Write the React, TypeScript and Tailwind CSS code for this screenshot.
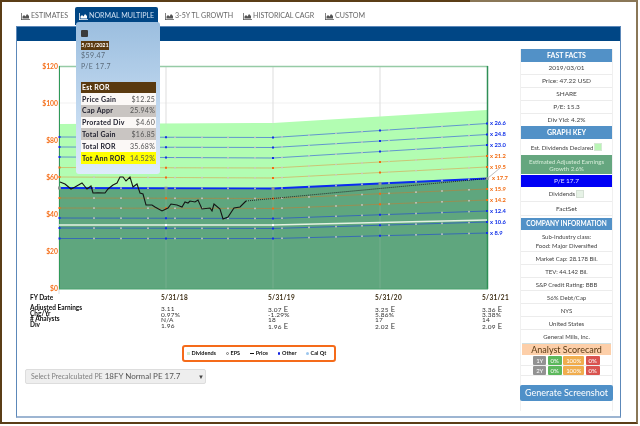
import React from "react";

const TabIcon = ({ light }: { light?: boolean }) => (
  <svg width="9" height="7" viewBox="0 0 18 14" className="shrink-0">
    <path d="M0 0h1.5v12.5H18V14H0z M3 11V7l3-3 3 3 3-5 4 4v5z" fill={light ? "#ffffff" : "#555555"} fillRule="evenodd" />
  </svg>
);

const tabs = [
  { label: "ESTIMATES", w: "w-[61px]" },
  { label: "NORMAL MULTIPLE", w: "w-[83px]", active: true },
  { label: "3-5Y TL GROWTH", w: "w-[78px]" },
  { label: "HISTORICAL CAGR", w: "w-[82px]" },
  { label: "CUSTOM", w: "w-[50px]" },
];

const bX = (x: number, y0: number, y1: number, y2: number) =>
  x <= 273 ? y0 + ((y1 - y0) * (x - 59)) / 214 : y1 + ((y2 - y1) * (x - 273)) / 214;

const lines = [
  { l: "26.6", c: "#1030e8", y: [137, 137.5, 123.5], ly: 123 },
  { l: "24.8", c: "#1030e8", y: [147, 147.5, 134.5], ly: 134 },
  { l: "23.0", c: "#1030e8", y: [157, 158, 145], ly: 145 },
  { l: "21.2", c: "#f26a10", y: [167.5, 168, 156], ly: 156 },
  { l: "19.5", c: "#f26a10", y: [177, 178, 167], ly: 167 },
  { l: "15.9", c: "#f26a10", y: [198, 198.5, 189], ly: 189 },
  { l: "14.2", c: "#f26a10", y: [208, 208.5, 200], ly: 200 },
  { l: "12.4", c: "#1030e8", y: [218, 218.5, 211], ly: 211 },
  { l: "10.6", c: "#1030e8", y: [228, 228.5, 222], ly: 222 },
  { l: "8.9", c: "#1030e8", y: [238.5, 238.5, 233], ly: 233 },
];

const grays = [94, 121, 148, 175, 202, 228, 255, 282, 309, 336, 362, 389, 416, 442, 469];
const years = [166, 273, 380, 487];
const axis = [
  ["$120", 66], ["$100", 103], ["$80", 140], ["$60", 177], ["$40", 214], ["$20", 251], ["$0", 288],
] as const;

const price =
  "60,182 65,184 71,189 75,187 82,183 87,189 91,186 93,193 98,192.7 105,193 108,189 113,185 117,183 120,177 123,177 126,181 130,177 133,187 137,184 140,193 143,194 146,205 152,205 155,207 162,211 168,208 171,204 177,205 182,207 185,202 188,203 190,201 195,202 198,200 202,209 210,208 212,211 214,204 220,209 223,219 228,217 234,208 240,207 246,201";

const Chart = () => (
  <svg width="503" height="254" viewBox="17 41 503 254" className="block" fontFamily="Lato, sans-serif">
    <rect x="59" y="66" width="429" height="223" fill="#ffffff" />
    <line x1="59" x2="487" y1="103" y2="103" stroke="#f1f1f1" />
    {[59, 166, 273, 380].map((x) => (
      <line key={x} x1={x} x2={x} y1="66" y2={x === 59 ? 294 : 125} stroke="#dddddd" />
    ))}
    <polygon points="59,124 273,123 487,110 487,178 273,188 59,188" fill="#b2fdb2" />
    <polygon points="59,188 273,188 487,178 487,289 59,289" fill="#5fa67e" />
    {[166, 273, 380].map((x) => (
      <line key={x} x1={x} x2={x} y1="123" y2="289" stroke="#d8d8d8" strokeOpacity="0.18" />
    ))}
    <line x1="59" x2="488" y1="66.5" y2="66.5" stroke="#96cba6" strokeWidth="1.5" />
    <line x1="59.5" x2="59.5" y1="66" y2="289" stroke="#2f9a58" />
    <line x1="487.5" x2="487.5" y1="66" y2="289" stroke="#2f8f56" strokeWidth="1.5" />
    <line x1="59" x2="488" y1="289" y2="289" stroke="#4aa36e" />
    {lines.map((ln) => (
      <g key={ln.l}>
        <polyline
          points={`59,${ln.y[0]} 273,${ln.y[1]} 487,${ln.y[2]}`}
          fill="none"
          stroke={ln.c}
          strokeOpacity={ln.c === "#f26a10" ? 0.38 : 0.5}
          strokeWidth="1"
        />
        {grays.map((x) => (
          <rect key={x} x={x - 0.8} y={bX(x, ln.y[0], ln.y[1], ln.y[2]) - 0.8} width="1.6" height="1.6" fill="#c9c9c9" />
        ))}
        {years.map((x) => (
          <rect key={x} x={x - 1} y={bX(x, ln.y[0], ln.y[1], ln.y[2]) - 1} width="2" height="2" fill={ln.c} />
        ))}
        <rect x="58.5" y={ln.y[0] - 1} width="2" height="2" fill={ln.c} />
        <text x="490" y={ln.ly + 2} fontSize="5.8" fontWeight="700" fill={ln.c}>
          {"x " + ln.l}
        </text>
      </g>
    ))}
    <polyline points="59,225 273,225 487,220" fill="none" stroke="#e6f2e2" strokeWidth="1.4" />
    {[166, 273].map((x) => <rect key={x} x={x - 1} y="224" width="2" height="2" fill="#ffffff" />)}
    <polyline points="59,188 273,188.5 487,178.5" fill="none" stroke="#0a2cf0" strokeWidth="1.8" />
    {grays.map((x) => (
      <rect key={x} x={x - 0.8} y={bX(x, 188, 188.5, 178.5) - 0.8} width="1.6" height="1.6" fill="#c9c9c9" />
    ))}
    {[59.5, 166, 273, 380, 487].map((x) => (
      <rect key={x} x={x - 1.5} y={bX(x, 188, 188.5, 178.5) - 1.5} width="3" height="3" fill="#8d9a92" />
    ))}
    <polyline points={price} fill="none" stroke="#151515" strokeWidth="1.1" />
    <line x1="246" y1="201" x2="487" y2="178.5" stroke="#1c1c1c" strokeWidth="0.9" strokeDasharray="1 1" />
    <line x1="488" y1="178" x2="500" y2="168" stroke="#bdbdbd" />
    <text x="492" y="180" fontSize="5.8" fontWeight="700" fill="#f26a10">x 17.7</text>
    {axis.map(([t, y]) => (
      <text key={t} x="58" y={y + 2.5} textAnchor="end" fontSize="6.8" fontWeight="700" fill="#f5701c">{t}</text>
    ))}
  </svg>
);

const E = () => <span className="text-[7.5px] leading-none"> E</span>;

const dataCols = [
  { fy: "5/31/18", w: "w-[107px]", v: [<>3.11</>, "0.97%", "N/A", <>1.96</>] },
  { fy: "5/31/19", w: "w-[107px]", v: [<>3.07<E /></>, "-1.29%", "18", <>1.96<E /></>] },
  { fy: "5/31/20", w: "w-[107px]", v: [<>3.25<E /></>, "5.86%", "17", <>2.02<E /></>] },
  { fy: "5/31/21", w: "w-[38px]", v: [<>3.36<E /></>, "3.38%", "14", <>2.09<E /></>] },
];

const DataTable = () => (
  <div className="flex pl-[13px] text-[6.5px] leading-[6px] text-[#333333]">
    <div className="w-[131px] shrink-0 font-bold text-[#111111]">
      <div className="h-[9px] mb-[1px]">FY Date</div>
      <div className="h-[5.7px]">Adjusted Earnings</div>
      <div className="h-[5.7px]">Chg/Yr</div>
      <div className="h-[5.7px]"># Analysts</div>
      <div className="h-[5.7px]">Div</div>
    </div>
    {dataCols.map((c) => (
      <div key={c.fy} className={`${c.w} shrink-0`}>
        <div className="h-[9px] mb-[1px] font-bold text-[#3a2a10] tracking-[0.3px]">{c.fy}</div>
        <div className="pt-[1px] tracking-[0.2px]">
          {c.v.map((x, i) => (
            <div key={i} className="h-[5.7px] whitespace-nowrap">{x}</div>
          ))}
        </div>
      </div>
    ))}
  </div>
);

const legend = [
  { t: "Dividends", m: <span className="w-[2.5px] h-[2.5px] bg-[#d3ecd3]" /> },
  { t: "EPS", m: <span className="w-[3px] h-[3px] rounded-full border border-[#777777]" /> },
  { t: "Price", m: <span className="w-[4px] h-[1px] bg-[#111111]" /> },
  { t: "Other", m: <span className="w-[2.5px] h-[2.5px] rounded-full bg-[#1020e0]" /> },
  { t: "Cal Qt", m: <span className="w-[2.5px] h-[2.5px] rounded-full bg-[#9cc6ee]" /> },
];

const Legend = () => (
  <div className="ml-[165px] mt-[16px] w-[154px] h-[17px] border-2 border-[#f56b1a] rounded-[3px] flex items-center pl-[3px] gap-[9.5px] text-[5.5px] font-bold text-[#111111]">
    {legend.map((l) => (
      <div key={l.t} className="flex items-center gap-[2px] whitespace-nowrap">
        {l.m}
        <span>{l.t}</span>
      </div>
    ))}
  </div>
);

const Row = ({ children, h = "h-[13px]", size = "text-[6.5px]", line = "border-b border-[#ececec]" }: { children: React.ReactNode; h?: string; size?: string; line?: string }) => (
  <div className={`${h} ${size} ${line} flex items-center justify-center text-[#444444] whitespace-nowrap`}>
    {children}
  </div>
);

const Head = ({ children, h = "h-[13px]", size = "text-[7px]" }: { children: React.ReactNode; h?: string; size?: string }) => (
  <div className={`${h} ${size} flex items-center justify-center bg-[#5291c7] text-white font-bold whitespace-nowrap`}>
    {children}
  </div>
);

const Badge = ({ c, w, t }: { c: string; w: string; t: string }) => (
  <span className={`${c} ${w} h-[9px] rounded-[1px] text-white text-[6px] flex items-center justify-center`}>{t}</span>
);

const ScoreRow = ({ y }: { y: string }) => (
  <div className="h-[10px] flex items-center justify-center gap-[1.5px] border-b border-[#ececec]">
    <Badge c="bg-[#929292]" w="w-[13px]" t={y} />
    <Badge c="bg-[#5cb85c]" w="w-[14px]" t="0%" />
    <Badge c="bg-[#f0ad4e]" w="w-[21px]" t="100%" />
    <Badge c="bg-[#d9534f]" w="w-[14px]" t="0%" />
  </div>
);

const Sidebar = () => (
  <div className="w-[93px] mt-[8px] h-[362px] border-x border-[#f0f0f0] shrink-0">
    <Head>FAST FACTS</Head>
    <Row>2019/03/01</Row>
    <Row>Price: 47.22 USD</Row>
    <Row>SHARE</Row>
    <Row>P/E: 15.3</Row>
    <Row h="h-[12px]" line="">Div Yld: 4.2%</Row>
    <Head>GRAPH KEY</Head>
    <div className="h-[16px] flex items-center justify-center gap-[1px] text-[6px] text-[#444444] whitespace-nowrap">
      Est. Dividends Declared
      <span className="w-[8px] h-[8px] bg-[#b9f5b5] border border-[#d5e8d5]" />
    </div>
    <div className="h-[19px] bg-[#65a67f] text-[#d5ecd8] text-[6px] leading-[7px] flex items-center justify-center text-center px-[2px]">
      Estimated Adjusted Earnings Growth 2.6%
    </div>
    <div className="h-[12px] mt-[0.5px] bg-[#0000f5] text-[#e4e4ff] text-[6.5px] flex items-center justify-center">P/E 17.7</div>
    <div className="h-[15px] flex items-center justify-center gap-[1px] text-[6px] text-[#444444] border-b border-[#ececec]">
      Dividends
      <span className="w-[8px] h-[8px] bg-[#e6f2e6] border border-[#d5e0d5]" />
    </div>
    <div className="pt-[1.5px]">
      <Row>FactSet</Row>
    </div>
    <div className="pt-[2px]">
      <Head h="h-[12px]" size="text-[6.5px]">COMPANY INFORMATION</Head>
    </div>
    <div className="h-[22px] flex flex-col items-center justify-center text-[6px] leading-[9px] text-[#444444] border-b border-[#ececec]">
      <span>Sub-Industry class:</span>
      <span>Food: Major Diversified</span>
    </div>
    <Row size="text-[6px]">Market Cap: 28.178 Bil.</Row>
    <Row size="text-[6px]">TEV: 44.142 Bil.</Row>
    <Row size="text-[6px]">S&amp;P Credit Rating: BBB</Row>
    <Row size="text-[6px]">56% Debt/Cap</Row>
    <Row size="text-[6px]">NYS</Row>
    <Row size="text-[6px]">United States</Row>
    <Row size="text-[6px]" line="">General Mills, Inc.</Row>
    <div className="h-[11.5px] mx-[1px] bg-[#fdcfa9] border-t border-[#d0dfe0] flex items-center justify-center text-[9px] text-[#5a3a14]">
      Analyst Scorecard
    </div>
    <div className="mt-[1px]">
      <ScoreRow y="1Y" />
      <ScoreRow y="2Y" />
    </div>
    <button className="mt-[9px] -mx-[1px] w-[93px] h-[16px] rounded-[2px] bg-[#4f90c8] text-white text-[9px] flex items-center justify-center whitespace-nowrap">
      Generate Screenshot
    </button>
  </div>
);

const rorRows = [
  ["Price Gain", "$12.25", "bg-[#fbf8f6]"],
  ["Cap Appr", "25.94%", "bg-[#c9c5c2]"],
  ["Prorated Div", "$4.60", "bg-[#fbf8f6]"],
  ["Total Gain", "$16.85", "bg-[#c9c5c2]"],
  ["Total ROR", "35.68%", "bg-[#fbf8f6]"],
  ["Tot Ann ROR", "14.52%", "bg-[#ffff00]"],
];

const Tooltip = () => (
  <div className="absolute left-[76px] top-[22px] w-[84px] h-[152px] rounded-[3px] bg-gradient-to-b from-[#9bbedf] to-[#deecfb] px-[5px] pt-[8px]">
    <div className="w-[7px] h-[7px] bg-[#3a3a3a] rounded-[1px]" />
    <div className="mt-[4px] w-[28px] h-[9px] bg-[#5a3a10] text-white text-[5.5px] font-bold flex items-center justify-center">5/31/2021</div>
    <div className="text-[7px] leading-[11px] tracking-[0.4px] text-[#5a6a7a]">
      <div>$59.47</div>
      <div>P/E 17.7</div>
    </div>
    <div className="mt-[10px] w-[75px] text-[7px] tracking-[0.25px]">
      <div className="h-[11px] bg-[#5a3a10] text-white font-bold flex items-center pl-[1px]">Est ROR</div>
      {rorRows.map(([a, b, c]) => (
        <div key={a} className={`h-[11.8px] ${c} flex items-center justify-between px-[1px] whitespace-nowrap`}>
          <span className="font-bold text-[#222230]">{a}</span>
          <span className="text-[#555555]">{b}</span>
        </div>
      ))}
    </div>
  </div>
);

export default function App() {
  return (
    <div className="relative w-[640px] h-[426px] bg-white overflow-hidden font-['Lato',sans-serif] blur-[0.3px]">
      <div className="w-[638px] h-[424px] border-2 border-[#5b3d17] border-t-[#8a7757] border-r-[#8a7757]">
        <div className="flex h-[18px] ml-[12px] mt-[5px] items-stretch">
          {tabs.map((t) => (
            <div
              key={t.label}
              className={`${t.w} shrink-0 flex items-center gap-[1px] text-[7.1px] whitespace-nowrap ${
                t.active ? "bg-[#004685] text-[#cfe0f2] rounded-t-[2px] pl-[4px]" : "text-[#666666] pl-[7px]"
              }`}
            >
              <TabIcon light={t.active} />
              <span>{t.label}</span>
            </div>
          ))}
        </div>
        <div className="ml-[14px] mt-[1px] w-[605px] h-[392px] border border-[#5c88b9] border-b-2 border-b-[#9db5d2]">
          <div className="h-[14px] bg-[#004685]" />
          <div className="flex">
            <div className="w-[503px] shrink-0">
              <Chart />
              <DataTable />
              <Legend />
              <div className="ml-[8px] mt-[7px] w-[181px] h-[15px] bg-[#eeeeee] border border-[#dddddd] rounded-[2px] flex items-center pl-[5px] pr-[1px] whitespace-nowrap">
                <span className="text-[7px] text-[#808080]">Select Precalculated PE</span>
                <span className="ml-[2px] text-[8px] text-[#555555]">18FY Normal PE 17.7</span>
                <span className="ml-auto text-[6px] text-[#444444]">▼</span>
              </div>
            </div>
            <Sidebar />
          </div>
        </div>
      </div>
      <div className="absolute left-0 top-0 w-[470px] h-[2px] bg-[#5b3d17]" />
      <Tooltip />
    </div>
  );
}
